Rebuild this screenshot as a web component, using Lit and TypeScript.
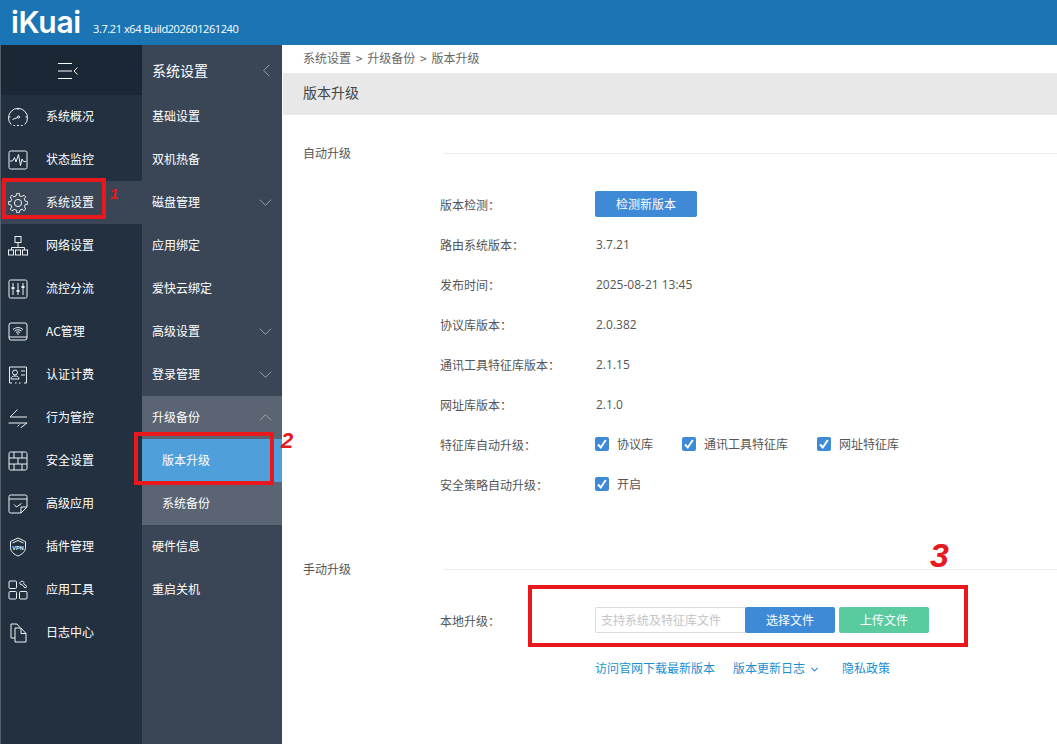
import {LitElement, html, svg, css} from 'lit';
import {customElement} from 'lit/decorators.js';

// gear outline built from teeth, easier than a hand written path
function gearPath() {
  const teeth = 8;
  const pts: string[] = [];
  for (let i = 0; i < teeth; i++) {
    const a = (i / teeth) * Math.PI * 2;
    const step = (Math.PI * 2) / teeth;
    const r = [
      [7.4, -0.5],
      [9.8, -0.28],
      [9.8, 0.08],
      [7.4, 0.14],
    ];
    for (const [rad, off] of r) {
      const t = a + off * step * 0.9 + step * 0.1;
      pts.push(`${(10 + rad * Math.cos(t)).toFixed(2)} ${(10 + rad * Math.sin(t)).toFixed(2)}`);
    }
  }
  return 'M' + pts.join('L') + 'Z';
}

const icons: Record<string, unknown> = {
  gauge: svg`<path d="M3.200 17.500A9.500 9.500 0 1 1 16.800 17.500"/><path d="M5.500 18.500h1.600M9 18.500h2M13 18.500h1.600"/><path d="M10 1v2M0.500 10h2M17.500 10h2"/><path d="M4.500 12.500l5-2"/><circle cx="10.500" cy="10" r="1.100"/>`,
  monitor: svg`<rect x="1" y="1" width="18" height="18" rx="1.500"/><path d="M2 11h2.500l2-3.500 1.500 4.500 2.500-7.500 2 11 1.500-6.500 1.500 2.500H18"/>`,
  gear: svg`<path d=${gearPath()}/><circle cx="10" cy="10" r="3.600"/>`,
  network: svg`<rect x="7" y="0.500" width="6" height="6"/><path d="M10 6.500v5M3.500 14v-2.500h13V14"/><rect x="0.500" y="14" width="5" height="5"/><rect x="7.500" y="14" width="5" height="5"/><rect x="14.500" y="14" width="5" height="5"/>`,
  sliders: svg`<rect x="1" y="1" width="18" height="18" rx="1.500"/><path d="M5 4v12M10 4v12M15 4v12"/><path class="solid" d="M3.500 8h3v2h-3zM8.500 11h3v2h-3zM13.500 7h3v2h-3z"/>`,
  wifi: svg`<rect x="1" y="1" width="18" height="17" rx="2"/><path d="M1 15h18"/><path d="M5 7.500c3-2.500 7-2.500 10 0M6.500 9c2-1.600 5-1.600 7 0M8 10.500c1.200-.8 2.800-.8 4 0"/><circle class="solid" cx="10" cy="12" r="0.800"/>`,
  card: svg`<path d="M4 18H1.500V2h17v16H16M7 18h1.500M11 18h1.500"/><circle cx="7" cy="7.500" r="2.500"/><path d="M3 14c0-2.500 2-3 4-3s4 .5 4 3z"/><path d="M13 6h4M13 10h4"/>`,
  swap: svg`<path d="M19 9H2L9.500 1.500"/><path d="M0.500 15H19L12.500 20"/><path d="M9.500 18.500l2-2"/>`,
  wall: svg`<rect x="1" y="1" width="18" height="18" rx="1.500"/><path d="M1 7h18M1 13h18M6 1v6M14 1v6M10 7v6M6 13v6M14 13v6"/>`,
  check: svg`<path d="M13 19H2.500A1.500 1.500 0 0 1 1 17.500V2.500A1.500 1.500 0 0 1 2.500 1h15A1.500 1.500 0 0 1 19 2.500V13z"/><path d="M1 5h18M13 19v-6h6"/><path d="M6 10.500l2.500 2.500 5-3.500"/>`,
  vpn: svg`<path d="M10 1l7.500 3.500v6c0 4-3.500 7-7.500 8.500-4-1.500-7.500-4.500-7.500-8.500v-6z"/><path d="M4.500 6 10 3.500 15.500 6"/><text x="10" y="12.500" text-anchor="middle" class="vpn">VPN</text>`,
  tools: svg`<rect x="1" y="1" width="7.500" height="7.500" rx="1"/><rect x="1" y="11.500" width="7.500" height="7.500" rx="1"/><rect x="11.500" y="11.500" width="7.500" height="7.500" rx="1"/><path d="M13 1.500l-1.500 1.500 1.500 2 1 -.5 3 3.500 2-1.500-3.500-3 .5-1-1.500-1.500z"/>`,
  log: svg`<path d="M7 15H3V1h6l3 3.500"/><path d="M7 5h6l5 5.500V19H7z"/><path d="M13 5v5.500h5"/>`,
};

const rail: [string, string][] = [
  ['gauge', '系统概况'],
  ['monitor', '状态监控'],
  ['gear', '系统设置'],
  ['network', '网络设置'],
  ['sliders', '流控分流'],
  ['wifi', 'AC管理'],
  ['card', '认证计费'],
  ['swap', '行为管控'],
  ['wall', '安全设置'],
  ['check', '高级应用'],
  ['vpn', '插件管理'],
  ['tools', '应用工具'],
  ['log', '日志中心'],
];

const chevron = (dir: string) => html`<svg class="chev ${dir}" viewBox="0 0 16 16"><path d="M1 4.500l7 7 7-7"/></svg>`;

@customElement('app-root')
export class AppRoot extends LitElement {
  static override styles = css`
    :host {
      display: block;
      position: relative;
      width: 1057px;
      height: 744px;
      overflow: hidden;
      background: #fff;
      font: 12px/1.2 "Noto Sans CJK SC", "Noto Sans", sans-serif;
      color: #555;
    }
    .top {
      height: 45px;
      background: #1b75b5;
      display: flex;
      align-items: flex-end;
      color: #fff;
      padding-left: 11px;
      box-sizing: border-box;
    }
    .logo {
      font: 600 30px/45px Inter, sans-serif;
      letter-spacing: -0.3px;
      height: 45px;
      margin-top: -8px;
      width: 82px;
    }
    .build {
      font: 11px/14px "Open Sans", sans-serif;
      padding-bottom: 9px;
      letter-spacing: -0.4px;
    }
    .body {
      display: flex;
      height: 699px;
    }
    .rail {
      width: 141px;
      border-left: 1px solid #56606c;
      background: #223040;
      color: #fff;
    }
    .rail-head {
      height: 50px;
      background: #1b2735;
      display: flex;
      align-items: center;
      justify-content: center;
    }
    .rail-head svg {
      width: 22px;
      height: 18px;
      fill: none;
      stroke: #fff;
      stroke-width: 1;
      margin-right: 8px;
    }
    .rail-row {
      height: 43px;
      display: flex;
      align-items: center;
      padding-left: 7px;
      gap: 18px;
    }
    .rail-row.on {
      background: #3a4656;
    }
    .ico {
      width: 20px;
      height: 20px;
      fill: none;
      stroke: #eef1f4;
      stroke-width: 1;
      flex: none;
    }
    .ico .solid {
      fill: #eef1f4;
      stroke: none;
    }
    .ico .vpn {
      font: 700 5.500px "Liberation Sans", sans-serif;
      fill: #eef1f4;
      stroke: none;
    }
    .side {
      width: 140px;
      background: #3a4656;
      color: #fff;
    }
    .side-head {
      height: 50px;
      padding: 0 10px;
      display: flex;
      align-items: center;
      justify-content: space-between;
      font-size: 14px;
      box-sizing: border-box;
    }
    .side-row {
      height: 43px;
      padding: 0 10px;
      display: flex;
      align-items: center;
      justify-content: space-between;
    }
    .group {
      background: #5a6472;
    }
    .side-row.sub {
      padding-left: 20px;
    }
    .side-row.current {
      background: #4f9fdb;
    }
    .chev {
      width: 13px;
      height: 13px;
      fill: none;
      stroke: #a4abb4;
      stroke-width: 1.100;
      flex: none;
    }
    .chev.up {
      transform: rotate(180deg);
    }
    .chev.left {
      transform: rotate(90deg);
      margin-right: -1px;
    }
    .main {
      flex: 1;
      min-width: 0;
    }
    .crumb {
      height: 27px;
      padding-left: 21px;
      display: flex;
      align-items: center;
      gap: 4.750px;
      color: #666;
    }
    .title {
      margin: 1px 0 0 1px;
      height: 42px;
      background: #e8e8e8;
      padding: 0 0 4px 20px;
      box-sizing: border-box;
      display: flex;
      align-items: center;
      font-size: 14px;
      color: #444;
    }
    .section {
      display: flex;
      align-items: center;
      padding-left: 21px;
      height: 16px;
      margin-top: 30px;
      color: #555;
    }
    .section span {
      width: 140px;
      flex: none;
    }
    .section i {
      flex: 1;
      height: 1px;
      background: #eeeeee;
    }
    .form {
      margin-top: 23px;
      margin-left: 158px;
    }
    .frow {
      height: 40px;
      display: flex;
      align-items: center;
    }
    .frow label {
      width: 155px;
      flex: none;
      padding-top: 2px;
    }
    .frow .val {
      margin-left: 1px;
      padding-top: 2px;
      font-family: "Open Sans", "Noto Sans CJK SC", sans-serif;
    }
    .btn {
      height: 26px;
      border-radius: 2px;
      color: #fff;
      display: flex;
      align-items: center;
      justify-content: center;
      background: #3e8ad6;
      box-sizing: border-box;
    }
    .btn.check-new {
      width: 102px;
    }
    .btn.pick {
      width: 90px;
    }
    .btn.send {
      width: 90px;
      margin-left: 4px;
      background: #5acb9f;
    }
    .opts {
      display: flex;
    }
    .opt {
      display: flex;
      align-items: center;
      gap: 8px;
    }
    .box {
      width: 14px;
      height: 14px;
      border-radius: 2px;
      background: #3e8ad6;
      flex: none;
    }
    .box svg {
      display: block;
      width: 14px;
      height: 14px;
      fill: none;
      stroke: #fff;
      stroke-width: 2;
    }
    .opt.a {
      width: 87px;
    }
    .opt.b {
      width: 135px;
    }
    .section.manual {
      margin-top: 57px;
    }
    .form.manual {
      margin-top: 30px;
    }
    .frow.upload {
      height: 26px;
    }
    .input {
      width: 150px;
      height: 26px;
      box-sizing: border-box;
      border: 1px solid #dcdcdc;
      border-right: none;
      border-radius: 2px 0 0 2px;
      color: #c4c4c4;
      display: flex;
      align-items: center;
      padding-left: 5px;
    }
    .links {
      display: flex;
      align-items: center;
      margin: 26px 0 0 155px;
      color: #1b8fd2;
      height: 18px;
      line-height: 18px;
    }
    .links span:nth-child(1) {
      width: 138px;
    }
    .links span:nth-child(2) {
      width: 109px;
    }
    .mini {
      width: 7px;
      height: 7px;
      stroke: #1b8fd2;
      stroke-width: 2.400;
      margin-left: 6px;
      display: inline-block;
    }
    .mark {
      position: absolute;
      border: 4px solid #e8181c;
      box-sizing: border-box;
    }
    .mark.one {
      left: 2px;
      top: 178px;
      width: 104px;
      height: 41px;
    }
    .mark.two {
      left: 134px;
      top: 432px;
      width: 140px;
      height: 53px;
    }
    .mark.three {
      left: 528px;
      top: 585px;
      width: 440px;
      height: 62px;
    }
    .num {
      position: absolute;
      color: #e8181c;
      font: italic 700 20px/1 "Liberation Sans", sans-serif;
    }
    .num.one {
      left: 110px;
      top: 186px;
      font-size: 15px;
    }
    .num.two {
      left: 281px;
      top: 430px;
      font-size: 22px;
    }
    .num.three {
      left: 930px;
      top: 538px;
      font-size: 34px;
    }
  `;

  override render() {
    return html`
      <div class="top">
        <div class="logo">iKuai</div>
        <div class="build">3.7.21 x64 Build202601261240</div>
      </div>
      <div class="body">
        <nav class="rail">
          <div class="rail-head">
            <svg viewBox="0 0 22 18"><path d="M1 2.500h14M1 10h14M1 17.500h14M20.500 6.500l-3.500 3.500 3.500 3.500"/></svg>
          </div>
          ${rail.map(
            ([icon, label]) => html`
              <div class="rail-row ${label === '系统设置' ? 'on' : ''}">
                <svg class="ico" viewBox="0 0 20 20">${icons[icon]}</svg>
                <span>${label}</span>
              </div>
            `
          )}
        </nav>
        <nav class="side">
          <div class="side-head"><span>系统设置</span>${chevron('left')}</div>
          <div class="side-row">基础设置</div>
          <div class="side-row">双机热备</div>
          <div class="side-row">磁盘管理${chevron('down')}</div>
          <div class="side-row">应用绑定</div>
          <div class="side-row">爱快云绑定</div>
          <div class="side-row">高级设置${chevron('down')}</div>
          <div class="side-row">登录管理${chevron('down')}</div>
          <div class="group">
            <div class="side-row">升级备份${chevron('up')}</div>
            <div class="side-row sub current">版本升级</div>
            <div class="side-row sub">系统备份</div>
          </div>
          <div class="side-row">硬件信息</div>
          <div class="side-row">重启关机</div>
        </nav>
        <main class="main">
          <div class="crumb">
            <span>系统设置</span><span>&gt;</span><span>升级备份</span><span>&gt;</span><span>版本升级</span>
          </div>
          <div class="title">版本升级</div>
          <div class="section"><span>自动升级</span><i></i></div>
          <div class="form">
            <div class="frow"><label>版本检测：</label><div class="btn check-new">检测新版本</div></div>
            <div class="frow"><label>路由系统版本：</label><span class="val">3.7.21</span></div>
            <div class="frow"><label>发布时间：</label><span class="val">2025-08-21 13:45</span></div>
            <div class="frow"><label>协议库版本：</label><span class="val">2.0.382</span></div>
            <div class="frow"><label>通讯工具特征库版本：</label><span class="val">2.1.15</span></div>
            <div class="frow"><label>网址库版本：</label><span class="val">2.1.0</span></div>
            <div class="frow">
              <label>特征库自动升级：</label>
              <div class="opts">
                <div class="opt a">${this.tick()}协议库</div>
                <div class="opt b">${this.tick()}通讯工具特征库</div>
                <div class="opt">${this.tick()}网址特征库</div>
              </div>
            </div>
            <div class="frow">
              <label>安全策略自动升级：</label>
              <div class="opt">${this.tick()}开启</div>
            </div>
          </div>
          <div class="section manual"><span>手动升级</span><i></i></div>
          <div class="form manual">
            <div class="frow upload">
              <label>本地升级：</label>
              <div class="input">支持系统及特征库文件</div>
              <div class="btn pick">选择文件</div>
              <div class="btn send">上传文件</div>
            </div>
            <div class="links">
              <span>访问官网下载最新版本</span>
              <span>版本更新日志<svg class="chev mini" viewBox="0 0 16 16"><path d="M1 4.500l7 7 7-7"/></svg></span>
              <span>隐私政策</span>
            </div>
          </div>
        </main>
      </div>
      <div class="mark one"></div>
      <div class="mark two"></div>
      <div class="mark three"></div>
      <div class="num one">1</div>
      <div class="num two">2</div>
      <div class="num three">3</div>
    `;
  }

  private tick() {
    return html`<span class="box"><svg viewBox="0 0 14 14"><path d="M3 7.500l2.800 3L10.800 3"/></svg></span>`;
  }
}
